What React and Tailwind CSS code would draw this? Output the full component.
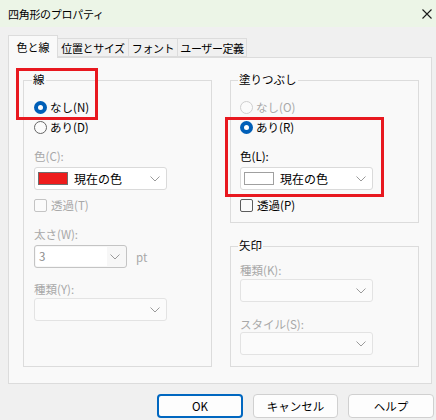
import React from "react";

const Chevron = ({ className = "" }) => (
  <svg width="10" height="6" viewBox="0 0 10 6" className={className}>
    <path d="M0.5 0.5 L5 5 L9.5 0.5" fill="none" stroke="#9a9a9a" strokeWidth="1" />
  </svg>
);

const Radio = ({ checked, disabled, label }) => (
  <div className="flex items-center h-[20px]">
    {checked ? (
      <span className="w-[13px] h-[13px] rounded-full bg-[#005fb8] flex items-center justify-center">
        <span className="w-[5px] h-[5px] rounded-full bg-white" />
      </span>
    ) : (
      <span
        className={
          disabled
            ? "w-[13px] h-[13px] rounded-full border border-[#cfcfcf] bg-[#fbfbfb]"
            : "w-[13px] h-[13px] rounded-full border border-[#666666] bg-[#fbfbfb]"
        }
      />
    )}
    <span className={disabled ? "ml-[3px] text-[#a8a8a8]" : "ml-[3px] text-black"}>{label}</span>
  </div>
);

const Check = ({ disabled, label }) => (
  <div className="flex items-center h-[20px]">
    <span
      className={
        disabled
          ? "w-[13px] h-[13px] rounded-[2px] border border-[#c4c4c4] bg-[#fbfbfb]"
          : "w-[13px] h-[13px] rounded-[2px] border border-[#5c5c5c] bg-[#fbfbfb]"
      }
    />
    <span className={disabled ? "ml-[4px] text-[#a8a8a8]" : "ml-[4px] text-black"}>{label}</span>
  </div>
);

const ColorCombo = ({ swatch }) => (
  <div className="w-[133px] h-[23px] border border-[#dadada] rounded-[3px] bg-white flex items-center pl-[3px] pr-[6px]">
    <span
      className={
        swatch === "red"
          ? "w-[30px] h-[13px] border border-[#6e6e6e] bg-[#ee1c1c]"
          : "w-[30px] h-[13px] border border-[#a0a0a0] bg-white"
      }
    />
    <span className="ml-[6px] text-[12px] text-black">現在の色</span>
    <Chevron className="ml-auto" />
  </div>
);

const EmptyCombo = () => (
  <div className="w-[133px] h-[23px] border border-[#e3e3e3] rounded-[3px] bg-[#fbfbfb] flex items-center justify-end pr-[6px]">
    <Chevron />
  </div>
);

const Label = ({ children, disabled }) => (
  <div className={disabled ? "h-[16px] leading-[16px] text-[#a8a8a8]" : "h-[16px] leading-[16px] text-black"}>
    {children}
  </div>
);

// group box; the legend follows the fieldset's left padding
const Group = ({ title, className, children }) => (
  <fieldset className={"border border-[#dcdcdc] " + className}>
    <legend className="-ml-[2px] px-[1px] h-[16px] leading-[14px] text-black">{title}</legend>
    {children}
  </fieldset>
);

export default function App() {
  return (
    <div
      className="relative w-[436px] h-[420px] overflow-hidden bg-[#f0f0f0] text-[11.5px] leading-[16px] text-black"
      style={{ fontFamily: '"Noto Sans CJK JP", "Noto Sans", sans-serif' }}
    >
      {/* title bar */}
      <div className="h-[27px] bg-[#ecf5e7] flex items-center justify-between pl-[8px] pr-[4px]">
        <span className="text-[11px] tracking-[-0.3px]">四角形のプロパティ</span>
        <svg width="10" height="10" viewBox="0 0 10 10">
          <path d="M0.5 0.5 L9.5 9.5 M9.5 0.5 L0.5 9.5" stroke="#1a1a1a" strokeWidth="1.1" />
        </svg>
      </div>

      {/* tabs */}
      <div className="flex items-end ml-[8px] mt-[8px] h-[22px] relative z-10 whitespace-nowrap text-[11px]">
        <div className="h-[23px] w-[50px] border border-b-0 border-[#dcdcdc] bg-[#f9f9f9] flex items-center justify-center -mb-px">
          色と線
        </div>
        <div className="h-[19px] w-[71px] border border-l-0 border-[#dcdcdc] flex items-center justify-center tracking-[-0.4px]">
          位置とサイズ
        </div>
        <div className="h-[19px] w-[49px] border border-l-0 border-[#dcdcdc] flex items-center justify-center tracking-[-0.4px]">
          フォント
        </div>
        <div className="h-[19px] w-[69px] border border-l-0 border-[#dcdcdc] flex items-center justify-center tracking-[-0.4px]">
          ユーザー定義
        </div>
      </div>

      {/* page */}
      <div className="ml-[8px] w-[424px] h-[327px] border border-[#dcdcdc] bg-[#f9f9f9] flex pl-[14px] pt-[14px]">
        <Group title="線" className="w-[189px] h-[295px] pt-[9px] pl-[10px]">
          <Radio checked label="なし(N)" />
          <Radio label="あり(D)" />
          <div className="mt-[11px]">
            <Label disabled>色(C):</Label>
          </div>
          <div className="mt-[3px]">
            <ColorCombo swatch="red" />
          </div>
          <div className="mt-[5px]">
            <Check disabled label="透過(T)" />
          </div>
          <div className="mt-[11px]">
            <Label disabled>太さ(W):</Label>
          </div>
          <div className="mt-[3px] flex items-center">
            <div className="w-[93px] h-[23px] border border-[#c4c4c4] rounded-[3px] bg-[#f7f7f7] flex items-center">
              <span className="w-[71px] h-[19px] ml-[1px] bg-white pl-[3px] leading-[19px] text-[#8a8a8a]">3</span>
              <Chevron className="ml-auto mr-[6px]" />
            </div>
            <span className="ml-[9px] text-[#a8a8a8]">pt</span>
          </div>
          <div className="mt-[13px]">
            <Label disabled>種類(Y):</Label>
          </div>
          <div className="mt-[1px]">
            <EmptyCombo />
          </div>
        </Group>

        <div className="ml-[18px] flex flex-col">
          <Group title="塗りつぶし" className="w-[189px] h-[151px] pt-[9px] pl-[9px]">
            <Radio disabled label="なし(O)" />
            <Radio checked label="あり(R)" />
            <div className="mt-[11px]">
              <Label>色(L):</Label>
            </div>
            <div className="mt-[3px]">
              <ColorCombo swatch="white" />
            </div>
            <div className="mt-[5px]">
              <Check label="透過(P)" />
            </div>
          </Group>

          <Group title="矢印" className="w-[189px] h-[129px] mt-[15px] pt-[8px] pl-[9px]">
            <Label disabled>種類(K):</Label>
            <div className="mt-[1px]">
              <EmptyCombo />
            </div>
            <div className="mt-[14px]">
              <Label disabled>スタイル(S):</Label>
            </div>
            <EmptyCombo />
          </Group>
        </div>
      </div>

      {/* dialog buttons */}
      <div className="mt-[10px] flex justify-end gap-[10px] pr-[2px]">
        <button className="w-[86px] h-[24px] rounded-[4px] border-2 border-[#0067c0] bg-[#fdfdfd] text-black">
          OK
        </button>
        <button className="w-[85px] h-[24px] rounded-[4px] border border-[#d0d0d0] bg-[#fdfdfd] text-black">
          キャンセル
        </button>
        <button className="w-[86px] h-[24px] rounded-[4px] border border-[#d0d0d0] bg-[#fdfdfd] text-black">
          ヘルプ
        </button>
      </div>

      {/* red highlight frames */}
      <div className="absolute left-[16px] top-[68px] w-[82px] h-[52px] border-[3px] border-[#e8181f]" />
      <div className="absolute left-[225px] top-[117px] w-[159px] h-[80px] border-[3px] border-[#e8181f]" />
    </div>
  );
}
